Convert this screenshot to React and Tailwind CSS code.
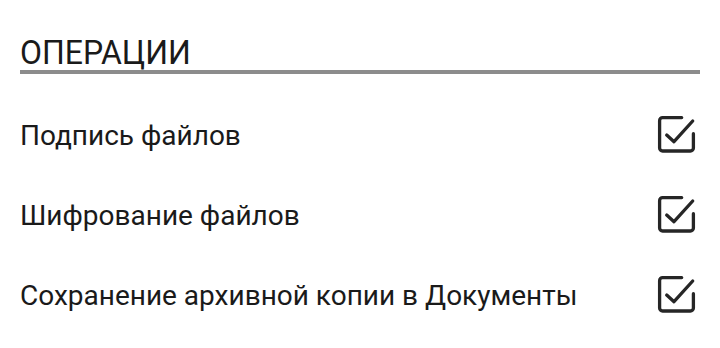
export default function App() {
  const rows = [
    "Подпись файлов",
    "Шифрование файлов",
    "Сохранение архивной копии в Документы",
  ];
  const Check = () => (
    <svg width="40" height="40" viewBox="0 0 40 40" fill="none" stroke="#262626" strokeWidth="3.3" strokeLinecap="round" strokeLinejoin="round">
      <path d="M25.7 3.6H6.6a3 3 0 0 0-3 3V34a3 3 0 0 0 3 3h27.8a3 3 0 0 0 3-3V19.7" />
      <path d="M10.7 21L18 27.7L36.7 7" />
    </svg>
  );
  return (
    <div className="w-[720px] h-[348px] bg-white px-5 text-[#1a1a1a]" style={{ fontFamily: "Roboto, 'Noto Sans', sans-serif" }}>
      <div className="pt-[35px] border-b-4 border-[#8c8c8c]">
        <div className="text-[34px] leading-[35px] origin-left scale-x-[0.94] whitespace-nowrap">ОПЕРАЦИИ</div>
      </div>
      <div className="pt-5">
        {rows.map((r) => (
          <div key={r} className="h-20 flex items-center justify-between">
            <span className="text-[28px] leading-[28px] mt-1">{r}</span>
            <div className="mr-1">
              <Check />
            </div>
          </div>
        ))}
      </div>
    </div>
  );
}
